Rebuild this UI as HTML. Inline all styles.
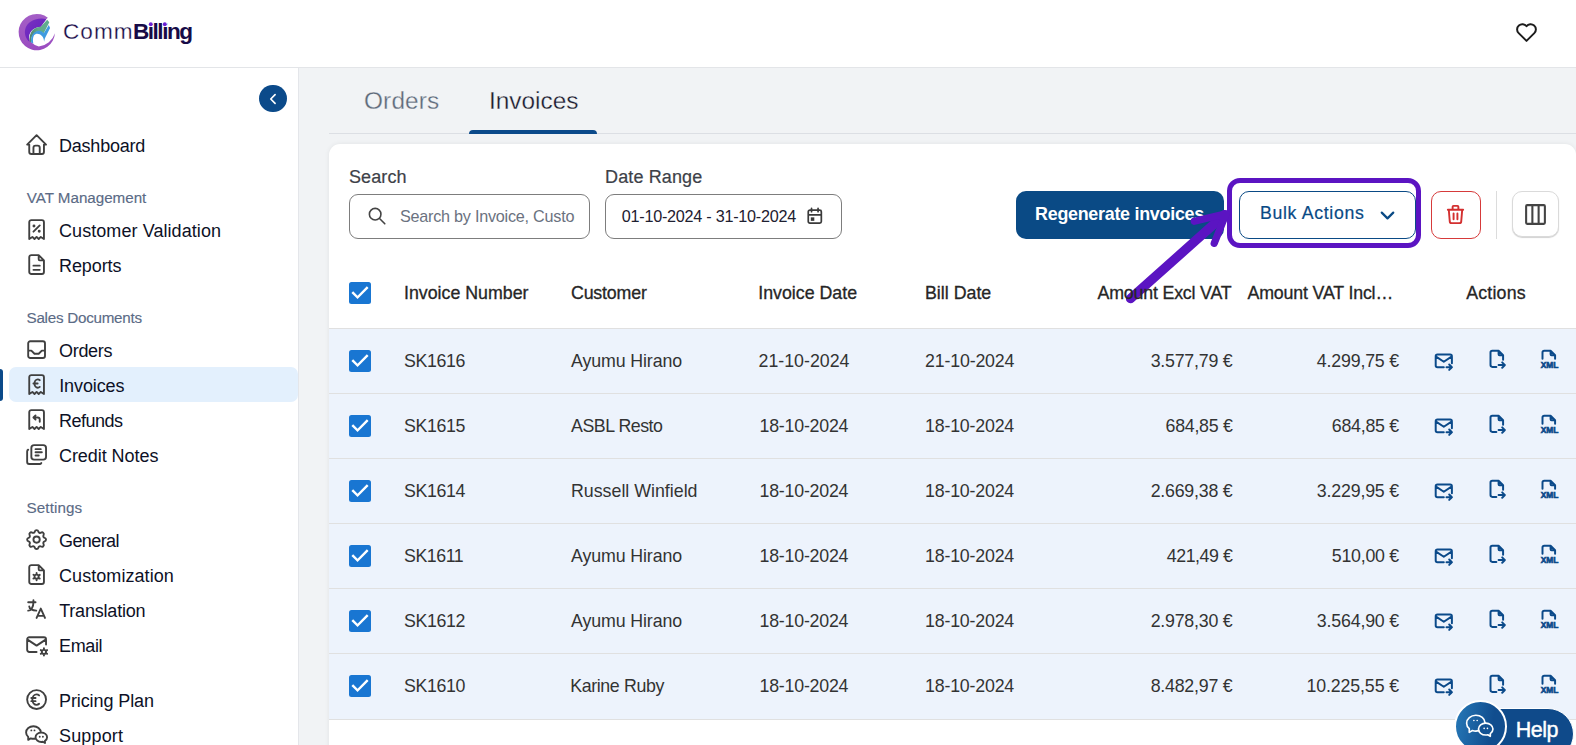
<!DOCTYPE html>
<html lang="en">
<head>
<meta charset="utf-8">
<title>CommBilling - Invoices</title>
<style>
*{box-sizing:border-box;margin:0;padding:0}
html,body{width:1576px;height:745px;overflow:hidden;background:#f1f3f5;font-family:"Liberation Sans",sans-serif;}
body{position:relative}
.abs{position:absolute}
svg{display:block;overflow:visible}
.ti{fill:none;stroke:#404040;stroke-width:1.8;stroke-linecap:round;stroke-linejoin:round}
/* header */
#hdr{position:absolute;left:0;top:0;width:1576px;height:68px;background:#fff;border-bottom:1px solid #e3e5e8}
.brand{position:absolute;height:30px;line-height:30px;font-size:22.6px;color:#170b47;white-space:nowrap}
#b_comm{font-weight:400;-webkit-text-stroke:0.3px #fff}
#b_bill{font-weight:700}
/* sidebar */
#side{position:absolute;left:0;top:68px;width:299px;height:677px;background:#fff;border-right:1px solid #e4e6ea}
.nav{position:absolute;height:24px;line-height:24px;font-size:18px;color:#0d1126;white-space:nowrap}
.sec{position:absolute;height:20px;line-height:20px;font-size:15.2px;color:#5b6b86;white-space:nowrap;-webkit-text-stroke:0.15px #5b6b86}
.nico{position:absolute;left:23.9px;width:25.2px;height:25.2px}
#sel{position:absolute;left:9px;top:367px;width:288.5px;height:34.5px;background:#e3f0fd;border-radius:7px}
#selbar{position:absolute;left:0;top:369px;width:3px;height:32px;background:#0b4a8a;border-radius:0 3px 3px 0}
#collapse{position:absolute;left:259.2px;top:84.7px;width:27.6px;height:27.6px;border-radius:50%;background:#0b4a8a}
/* tabs */
.tab{position:absolute;height:32px;line-height:32px;font-size:24.4px;white-space:nowrap;-webkit-text-stroke:0.3px #f1f3f5}
#tabline{position:absolute;left:329px;top:133px;width:1247px;height:1px;background:#dcdfe4}
#tabul{position:absolute;left:469px;top:130px;width:128px;height:4px;background:#0b4a8a;border-radius:4px 4px 0 0}
/* card */
#card{position:absolute;left:329px;top:144px;width:1247px;height:620px;background:#fff;border-radius:11px 11px 0 0;box-shadow:0 0 5px rgba(0,0,0,.07)}
.lbl{position:absolute;height:24px;line-height:24px;font-size:18px;color:#3d4148;white-space:nowrap;-webkit-text-stroke:0.2px #3d4148}
.inp{position:absolute;top:194px;height:45px;border:1px solid #7d7d7d;border-radius:9px;background:#fff}
.btn{position:absolute;white-space:nowrap}
/* table */
.th{position:absolute;height:24px;line-height:24px;font-size:17.8px;color:#262626;white-space:nowrap;font-weight:400;-webkit-text-stroke:0.3px #262626}
.row{position:absolute;left:329px;width:1247px;height:65px;background:#edf3fc;border-top:1px solid #e0e0e0}
.td{position:absolute;height:24px;line-height:24px;font-size:17.8px;color:#333;white-space:nowrap;letter-spacing:0.05px}
.r{text-align:right}
.cb{position:absolute;left:20px;width:22px;height:22px;background:#1976d2;border-radius:2.5px}
.cb svg{position:absolute;left:0;top:0}
.ai{position:absolute;width:21.6px;height:21.6px}
.ai .s{fill:none;stroke:#0b4a8a;stroke-width:2.2;stroke-linecap:round;stroke-linejoin:round}
</style>
</head>
<body>
<!-- HEADER -->
<div id="hdr">
<svg class="abs" id="logo" style="left:14px;top:8px;width:50px;height:48px" viewBox="0 0 776 745">
<defs><linearGradient id="lg1" x1="0" y1="0" x2="0" y2="1"><stop offset="0" stop-color="#a45fc6"/><stop offset="1" stop-color="#9a4cc0"/></linearGradient>
<linearGradient id="lg2" x1="0" y1="0" x2="1" y2="1"><stop offset="0" stop-color="#7a33c0"/><stop offset="1" stop-color="#5f1cc0"/></linearGradient>
<linearGradient id="lg3" x1="0" y1="0" x2="1" y2="0"><stop offset="0" stop-color="#4d8470"/><stop offset="0.45" stop-color="#62ab8d"/><stop offset="1" stop-color="#5fae8f"/></linearGradient></defs>
<path d="M525 150 A282 282 0 1 0 635 390 A300 300 0 0 1 385 598 A200 200 0 0 1 225 430 C225 330 300 290 415 290 L500 175 Z" fill="url(#lg1)"/>
<path d="M238 525 C125 420 150 235 330 180 C400 158 460 163 500 175 L415 292 C330 300 270 340 240 410 C228 450 230 490 238 525 Z" fill="url(#lg2)"/>
<path d="M515 183 L548 222 L462 392 C400 340 310 360 275 450 C265 480 262 510 264 536 L246 520 C225 430 270 300 415 292 Z" fill="url(#lg3)"/>
<path d="M540 262 L560 310 L480 470 L466 525 C470 440 400 390 340 402 C300 415 285 470 300 550 L266 536 C255 440 300 360 380 352 C420 350 445 370 462 392 Z" fill="#3f9be0"/>
</svg>
  <div class="brand" id="b_comm" style="left:63px;top:17px;letter-spacing:1.05px">Comm</div><div class="brand" id="b_bill" style="left:133px;top:17px;letter-spacing:-1.5px">Billing</div>
<svg class="abs" style="left:146px;top:20px;width:24px;height:8px" viewBox="146 20 24 8"><rect x="148.6" y="22" width="4.4" height="4.2" fill="#fff"/><rect x="162.6" y="22" width="4.4" height="4.2" fill="#fff"/><circle cx="150.8" cy="24.3" r="1.95" fill="#6b1fd3"/><circle cx="164.8" cy="24.3" r="1.95" fill="#6b1fd3"/></svg>
</div>
<!-- SIDEBAR -->
<div id="side"></div>
<div id="sel"></div><div id="selbar"></div>
<div id="collapse"></div>

<div class="nav" id="n_dash" style="left:59.00px;top:133.60px;letter-spacing:-0.22px">Dashboard</div>
<div class="sec" id="s_vat" style="left:26.70px;top:188.00px;letter-spacing:-0.02px">VAT Management</div>
<div class="nav" id="n_cust" style="left:59.00px;top:219.10px;letter-spacing:0.07px">Customer Validation</div>
<div class="nav" id="n_rep" style="left:59.00px;top:254.10px;letter-spacing:-0.10px">Reports</div>
<div class="sec" id="s_sales" style="left:26.50px;top:308.00px;letter-spacing:-0.25px">Sales Documents</div>
<div class="nav" id="n_ord" style="left:59.00px;top:338.60px;letter-spacing:-0.30px">Orders</div>
<div class="nav" id="n_inv" style="left:59.2px;top:373.60px;letter-spacing:-0.10px">Invoices</div>
<div class="nav" id="n_ref" style="left:59.00px;top:408.60px;letter-spacing:-0.52px">Refunds</div>
<div class="nav" id="n_cred" style="left:59.00px;top:443.60px;letter-spacing:-0.06px">Credit Notes</div>
<div class="sec" id="s_set" style="left:26.50px;top:497.75px;letter-spacing:0.12px">Settings</div>
<div class="nav" id="n_gen" style="left:59.00px;top:528.60px;letter-spacing:-0.60px">General</div>
<div class="nav" id="n_cus" style="left:59.00px;top:563.60px;letter-spacing:0.06px">Customization</div>
<div class="nav" id="n_tra" style="left:59.2px;top:598.60px;letter-spacing:-0.20px">Translation</div>
<div class="nav" id="n_em" style="left:59.00px;top:633.60px;letter-spacing:-0.35px">Email</div>
<div class="nav" id="n_pri" style="left:59.00px;top:688.60px;letter-spacing:-0.10px">Pricing Plan</div>
<div class="nav" id="n_sup" style="left:59.00px;top:723.60px;letter-spacing:0.15px">Support</div>


<!-- NAV ICONS -->
<svg class="nico" style="top:131.7px" viewBox="0 0 24 24"><path class="ti" d="M5 12l-2 0l9 -9l9 9l-2 0 M5 12v7a2 2 0 0 0 2 2h10a2 2 0 0 0 2 -2v-7 M9 21v-6a2 2 0 0 1 2 -2h2a2 2 0 0 1 2 2v6"/></svg>
<svg class="nico" style="top:217.0px" viewBox="0 0 24 24"><path class="ti" d="M9 14l6 -6 M9.5 8.5m-.5 0a.5 .5 0 1 0 1 0a.5 .5 0 1 0 -1 0 M14.5 13.5m-.5 0a.5 .5 0 1 0 1 0a.5 .5 0 1 0 -1 0 M5 21v-16a2 2 0 0 1 2 -2h10a2 2 0 0 1 2 2v16l-3 -2l-2 2l-2 -2l-2 2l-2 -2l-3 2"/></svg>
<svg class="nico" style="top:251.9px" viewBox="0 0 24 24"><path class="ti" d="M14 3v4a1 1 0 0 0 1 1h4 M17 21h-10a2 2 0 0 1 -2 -2v-14a2 2 0 0 1 2 -2h7l5 5v11a2 2 0 0 1 -2 2z M9 17h6 M9 13h6"/></svg>
<svg class="nico" style="top:336.9px" viewBox="0 0 24 24"><path class="ti" d="M4 4m0 2a2 2 0 0 1 2 -2h12a2 2 0 0 1 2 2v12a2 2 0 0 1 -2 2h-12a2 2 0 0 1 -2 -2z M4 13h3l3 3h4l3 -3h3"/></svg>
<svg class="nico" style="top:372.0px" viewBox="0 0 24 24"><path class="ti" d="M5 21v-16a2 2 0 0 1 2 -2h10a2 2 0 0 1 2 2v16l-3 -2l-2 2l-2 -2l-2 2l-2 -2l-3 2 M15 7.8c-.523 -.502 -1.172 -.8 -1.875 -.8c-1.727 0 -3.125 1.791 -3.125 4s1.398 4 3.125 4c.703 0 1.352 -.298 1.874 -.8 M9 11h4"/></svg>
<svg class="nico" style="top:407.0px" viewBox="0 0 24 24"><path class="ti" d="M5 21v-16a2 2 0 0 1 2 -2h10a2 2 0 0 1 2 2v16l-3 -2l-2 2l-2 -2l-2 2l-2 -2l-3 2 M15 14v-2a2 2 0 0 0 -2 -2h-4l2 -2m0 4l-2 -2"/></svg>
<svg class="nico" style="top:442.0px" viewBox="0 0 24 24"><path class="ti" d="M7 5.667a2.667 2.667 0 0 1 2.667 -2.667h8.666a2.667 2.667 0 0 1 2.667 2.667v8.466a2.667 2.667 0 0 1 -2.667 2.667h-8.666a2.667 2.667 0 0 1 -2.667 -2.667z M4.012 7.263a2.005 2.005 0 0 0 -1.012 1.737v10c0 1.100 .9 2 2 2h10c.75 0 1.158 -.385 1.500 -1 M11 6.800h5 M11 9.800h6 M11 12.800h3"/></svg>
<svg class="nico" style="top:527.0px" viewBox="0 0 24 24"><path class="ti" d="M10.325 4.317c.426 -1.756 2.924 -1.756 3.35 0a1.724 1.724 0 0 0 2.573 1.066c1.543 -.94 3.31 .826 2.37 2.37a1.724 1.724 0 0 0 1.065 2.572c1.756 .426 1.756 2.924 0 3.35a1.724 1.724 0 0 0 -1.066 2.573c.94 1.543 -.826 3.31 -2.37 2.37a1.724 1.724 0 0 0 -2.572 1.065c-.426 1.756 -2.924 1.756 -3.35 0a1.724 1.724 0 0 0 -2.573 -1.066c-1.543 .94 -3.31 -.826 -2.37 -2.37a1.724 1.724 0 0 0 -1.065 -2.572c-1.756 -.426 -1.756 -2.924 0 -3.35a1.724 1.724 0 0 0 1.066 -2.573c-.94 -1.543 .826 -3.31 2.37 -2.37c1 .608 2.296 .07 2.572 -1.065z M9 12a3 3 0 1 0 6 0a3 3 0 0 0 -6 0"/></svg>
<svg class="nico" style="top:562.0px" viewBox="0 0 24 24"><path class="ti" d="M12 14m-2 0a2 2 0 1 0 4 0a2 2 0 1 0 -4 0 M12 10.5v1.5 M12 16v1.5 M15.031 12.25l-1.299 .75 M10.268 15l-1.3 .75 M15 15.803l-1.285 -.773 M10.285 12.97l-1.285 -.773 M14 3v4a1 1 0 0 0 1 1h4 M17 21h-10a2 2 0 0 1 -2 -2v-14a2 2 0 0 1 2 -2h7l5 5v11a2 2 0 0 1 -2 2z"/></svg>
<svg class="nico" style="top:597.0px" viewBox="0 0 24 24"><path class="ti" d="M4 5h7 M9 3v2c0 4.418 -2.239 8 -5 8 M5 9c0 2.144 2.952 3.908 6.7 4 M12 20l4 -9l4 9 M19.1 18h-6.2"/></svg>
<svg class="nico" style="top:632.0px" viewBox="0 0 24 24"><path class="ti" d="M12 19h-7a2 2 0 0 1 -2 -2v-10a2 2 0 0 1 2 -2h14a2 2 0 0 1 2 2v5 M3 7l9 6l9 -6 M19.001 19m-2 0a2 2 0 1 0 4 0a2 2 0 1 0 -4 0 M19.001 15.5v1.5 M19.001 21v1.5 M22.032 17.25l-1.299 .75 M17.27 20l-1.3 .75 M15.97 17.25l1.3 .75 M20.733 20l1.3 .75"/></svg>
<svg class="nico" style="top:687.0px" viewBox="0 0 24 24"><path class="ti" d="M12 12m-9 0a9 9 0 1 0 18 0a9 9 0 1 0 -18 0 M14.401 8c-.669 -.628 -1.5 -1 -2.401 -1c-2.21 0 -4 2.239 -4 5s1.79 5 4 5c.9 0 1.731 -.372 2.4 -1 M7 10.5h4 M7 13.5h4"/></svg>
<svg class="nico" style="top:722.0px" viewBox="0 0 24 24"><path class="ti" d="M16.5 10c3.038 0 5.5 2.015 5.5 4.5c0 1.397 -.778 2.645 -2 3.470l0 2.030l-1.964 -1.178a6.649 6.649 0 0 1 -1.536 .178c-3.038 0 -5.5 -2.015 -5.500 -4.500s2.462 -4.500 5.500 -4.500z M11.197 15.698c-.69 .196 -1.43 .302 -2.197 .302a8.008 8.008 0 0 1 -2.612 -.432l-2.388 1.432v-2.801c-1.237 -1.082 -2 -2.564 -2 -4.199c0 -3.314 3.134 -6 7 -6c3.782 0 6.863 2.570 7 5.785l0 .233 M10 8h.01 M7 8h.01 M15 14h.01 M18 14h.01"/></svg>
<svg class="abs" style="left:263px;top:88.7px;width:20px;height:20px" viewBox="0 0 24 24"><path d="M14.5 6.800l-5.200 5.200l5.200 5.200" fill="none" stroke="#fff" stroke-width="2" stroke-linecap="round" stroke-linejoin="round"/></svg>
<svg class="abs" style="left:1514.1px;top:19.8px;width:25px;height:25px" viewBox="0 0 24 24"><path d="M19.5 12.572l-7.5 7.428l-7.5 -7.428a5 5 0 1 1 7.500 -6.566a5 5 0 1 1 7.500 6.572" fill="none" stroke="#1c1c1c" stroke-width="1.9" stroke-linecap="round" stroke-linejoin="round"/></svg>
<!-- TABS -->
<div class="tab" id="t_ord" style="left:364.00px;top:85.00px;letter-spacing:0.15px;color:#5e6a7a">Orders</div>
<div class="tab" id="t_inv" style="left:489.00px;top:85.00px;letter-spacing:-0.01px;color:#1b1a2e">Invoices</div>
<div id="tabline"></div><div id="tabul"></div>

<!-- CARD -->
<div id="card"></div>
<div class="lbl" id="l_s" style="left:349.00px;top:165.00px;letter-spacing:0.10px">Search</div>
<div class="lbl" id="l_d" style="left:605.00px;top:165.00px;letter-spacing:0.13px">Date Range</div>
<div class="inp" style="left:349px;width:241px"></div>
<div class="inp" style="left:605px;width:237px"></div>

<!-- INPUT CONTENTS -->
<svg class="abs" style="left:365.5px;top:205.2px;width:22px;height:22px" viewBox="0 0 24 24"><path d="M10 10m-6.3 0a6.3 6.3 0 1 0 12.6 0a6.3 6.3 0 1 0 -12.6 0 M20.500 20.500l-6 -6" fill="none" stroke="#444" stroke-width="1.75" stroke-linecap="round"/></svg>
<div class="abs" style="left:396px;top:200px;width:179px;height:32px;overflow:hidden;white-space:nowrap;font-size:16.2px;line-height:24px;color:#6b7280"><span id="ph" style="position:relative;left:4.00px;top:4.00px;letter-spacing:-0.24px">Search by Invoice, Custo</span><span style="position:relative;left:4px;top:4px">mer</span></div>
<div class="abs" id="dr" style="left:621.75px;top:204.00px;letter-spacing:-0.25px;height:24px;line-height:24px;font-size:16.2px;color:#1e2030;white-space:nowrap">01-10-2024 - 31-10-2024</div>
<svg class="abs" style="left:804.8px;top:206.4px;width:19.6px;height:19.6px" viewBox="0 0 24 24"><path d="M4 5m0 2a2 2 0 0 1 2 -2h12a2 2 0 0 1 2 2v12a2 2 0 0 1 -2 2h-12a2 2 0 0 1 -2 -2z M16 3l0 4 M8 3l0 4 M4 11l16 0" fill="none" stroke="#3a3a3a" stroke-width="2.1" stroke-linecap="round" stroke-linejoin="round"/><rect x="7.1" y="13.9" width="4.3" height="4.300" fill="#3a3a3a"/></svg>

<!-- BUTTONS -->
<div class="btn" id="regen" style="left:1016px;top:191px;width:208px;height:48px;background:#0a4a85;border-radius:10px;color:#fff;font-weight:700;font-size:17.9px;line-height:48px;text-align:center"><span id="rg" style="position:relative;left:-0.5px;top:-1.5px;letter-spacing:-0.27px">Regenerate invoices</span></div>
<div class="abs" id="hl" style="left:1227px;top:178px;width:194px;height:70px;border:5px solid #5b14c2;border-radius:13px"></div>
<div class="btn" id="bulk" style="left:1239px;top:191px;width:177px;height:48px;border:1px solid #0a4a85;border-radius:10px;background:#fff"></div>
<div class="abs" id="bulkt" style="left:1260.00px;top:200.50px;letter-spacing:0.68px;height:24px;line-height:24px;font-size:17.7px;color:#0a4a85;white-space:nowrap;-webkit-text-stroke:0.2px #0a4a85">Bulk Actions</div>
<svg class="abs" style="left:1376px;top:203.500px;width:23px;height:23px" viewBox="0 0 24 24"><path d="M6 9l6 6l6 -6" fill="none" stroke="#0a4a85" stroke-width="2.3" stroke-linecap="round" stroke-linejoin="round"/></svg>
<div class="btn" id="del" style="left:1431px;top:191px;width:50px;height:48px;border:1px solid #d63a3a;border-radius:10px;background:#fff"></div>
<svg class="abs" style="left:1443.500px;top:203px;width:23px;height:23px" viewBox="0 0 24 24"><path d="M4 7l16 0 M10 11l0 6 M14 11l0 6 M5 7l1 12a2 2 0 0 0 2 2h8a2 2 0 0 0 2 -2l1 -12 M9 7v-3a1 1 0 0 1 1 -1h4a1 1 0 0 1 1 1v3" fill="none" stroke="#d32f2f" stroke-width="2" stroke-linecap="round" stroke-linejoin="round"/></svg>
<div class="abs" style="left:1496px;top:191px;width:1px;height:48px;background:#dcdcdc"></div>
<div class="btn" id="cols" style="left:1512px;top:191px;width:47px;height:46px;border:1px solid #dadada;border-radius:10px;background:#fff;box-shadow:0 1px 1px rgba(0,0,0,.18)"></div>
<svg class="abs" style="left:1522.9px;top:201.6px;width:25px;height:25px" viewBox="0 0 24 24"><path d="M3 3m0 1a1 1 0 0 1 1 -1h16a1 1 0 0 1 1 1v16a1 1 0 0 1 -1 1h-16a1 1 0 0 1 -1 -1zm6 -1v18m6 -18v18" fill="none" stroke="#444" stroke-width="2" stroke-linecap="round" stroke-linejoin="round"/></svg>
<!-- ARROW -->
<svg class="abs" style="left:0;top:0;width:1576px;height:745px;pointer-events:none" viewBox="0 0 1576 745"><path d="M1130.6 298.6 L1224.5 214.8" fill="none" stroke="#5b14c2" stroke-width="9.4" stroke-linecap="round"/><path d="M1194.3 221.3 L1226 213.800 L1214.2 243.300" fill="none" stroke="#5b14c2" stroke-width="7.2" stroke-linecap="round" stroke-linejoin="round"/></svg>

<!-- TABLE HEADER -->
<div class="cb" style="left:349px;top:282px"><svg width="22" height="22" viewBox="0 0 22 22"><path d="M8.560 17.100L2.440 11L4.170 9.280L8.560 13.650L17.830 4.370L19.560 6.110Z" fill="#fff"/></svg></div>
<div class="th" id="th0" style="left:404.00px;top:281.00px;letter-spacing:0.00px">Invoice Number</div>
<div class="th" id="th1" style="left:571.00px;top:281.00px;letter-spacing:-0.18px">Customer</div>
<div class="th" id="th2" style="left:758.25px;top:281.00px;letter-spacing:0.00px">Invoice Date</div>
<div class="th" id="th3" style="left:925.00px;top:281.00px;letter-spacing:0.00px">Bill Date</div>
<div class="th r" id="th4" style="right:344.50px;top:281.00px;letter-spacing:-0.18px">Amount Excl VAT</div>
<div class="th" id="th5" style="left:1247.50px;top:281.00px;letter-spacing:-0.17px">Amount VAT Incl…</div>
<div class="th" id="th6" style="left:1466.25px;top:281.00px;letter-spacing:0.17px">Actions</div>

<!-- TABLE ROWS -->
<div class="row" style="top:328px"><div class="cb" style="top:21px"><svg width="22" height="22" viewBox="0 0 22 22"><path d="M8.560 17.100L2.440 11L4.170 9.280L8.560 13.650L17.830 4.370L19.560 6.110Z" fill="#fff"/></svg></div><div class="td" id="c0_1" style="left:75.00px;top:20.00px;letter-spacing:-0.40px">SK1616</div><div class="td" id="c0_2" style="left:242.00px;top:20.00px;letter-spacing:-0.11px">Ayumu Hirano</div><div class="td" id="c0_3" style="left:429.50px;top:20.00px;letter-spacing:0.00px">21-10-2024</div><div class="td" id="c0_4" style="left:596.00px;top:20.00px;letter-spacing:-0.17px">21-10-2024</div><div class="td r" id="c0_5" style="right:343.50px;top:20.00px;letter-spacing:-0.22px">3.577,79 €</div><div class="td r" id="c0_6" style="right:177.00px;top:20.00px;letter-spacing:-0.19px">4.299,75 €</div><svg class="ai" style="left:1103.7px;top:21.6px" viewBox="0 0 24 24"><path class="s" d="M12 18h-7a2 2 0 0 1 -2 -2v-10a2 2 0 0 1 2 -2h14a2 2 0 0 1 2 2v7.500 M3 6l9 6l9 -6 M15 18h6 M18 15l3 3l-3 3"/></svg><svg class="ai" style="left:1157.3px;top:19.4px" viewBox="0 0 24 24"><path class="s" d="M14 3v4a1 1 0 0 0 1 1h4 M11.500 21h-4.500a2 2 0 0 1 -2 -2v-14a2 2 0 0 1 2 -2h7l5 5v5m-5 6h7m-3 -3l3 3l-3 3"/></svg><svg class="ai" style="left:1209.1px;top:19.1px" viewBox="0 0 24 24"><path class="s" d="M14 3v4a1 1 0 0 0 1 1h4 M5 12v-7a2 2 0 0 1 2 -2h7l5 5v4"/><text x="3.1" y="22.1" font-family="Liberation Sans, sans-serif" font-weight="700" font-size="9.8" fill="#0b4a8a" stroke="#0b4a8a" stroke-width="0.75" textLength="19.6" lengthAdjust="spacingAndGlyphs">XML</text></svg></div>
<div class="row" style="top:393px"><div class="cb" style="top:21px"><svg width="22" height="22" viewBox="0 0 22 22"><path d="M8.560 17.100L2.440 11L4.170 9.280L8.560 13.650L17.830 4.370L19.560 6.110Z" fill="#fff"/></svg></div><div class="td" id="c1_1" style="left:75.00px;top:20.00px;letter-spacing:-0.40px">SK1615</div><div class="td" id="c1_2" style="left:242.00px;top:20.00px;letter-spacing:-0.47px">ASBL Resto</div><div class="td" id="c1_3" style="left:430.50px;top:20.00px;letter-spacing:-0.22px">18-10-2024</div><div class="td" id="c1_4" style="left:596.00px;top:20.00px;letter-spacing:-0.19px">18-10-2024</div><div class="td r" id="c1_5" style="right:343.50px;top:20.00px;letter-spacing:-0.29px">684,85 €</div><div class="td r" id="c1_6" style="right:177.00px;top:20.00px;letter-spacing:-0.25px">684,85 €</div><svg class="ai" style="left:1103.7px;top:21.6px" viewBox="0 0 24 24"><path class="s" d="M12 18h-7a2 2 0 0 1 -2 -2v-10a2 2 0 0 1 2 -2h14a2 2 0 0 1 2 2v7.500 M3 6l9 6l9 -6 M15 18h6 M18 15l3 3l-3 3"/></svg><svg class="ai" style="left:1157.3px;top:19.4px" viewBox="0 0 24 24"><path class="s" d="M14 3v4a1 1 0 0 0 1 1h4 M11.500 21h-4.500a2 2 0 0 1 -2 -2v-14a2 2 0 0 1 2 -2h7l5 5v5m-5 6h7m-3 -3l3 3l-3 3"/></svg><svg class="ai" style="left:1209.1px;top:19.1px" viewBox="0 0 24 24"><path class="s" d="M14 3v4a1 1 0 0 0 1 1h4 M5 12v-7a2 2 0 0 1 2 -2h7l5 5v4"/><text x="3.1" y="22.1" font-family="Liberation Sans, sans-serif" font-weight="700" font-size="9.8" fill="#0b4a8a" stroke="#0b4a8a" stroke-width="0.75" textLength="19.6" lengthAdjust="spacingAndGlyphs">XML</text></svg></div>
<div class="row" style="top:458px"><div class="cb" style="top:21px"><svg width="22" height="22" viewBox="0 0 22 22"><path d="M8.560 17.100L2.440 11L4.170 9.280L8.560 13.650L17.830 4.370L19.560 6.110Z" fill="#fff"/></svg></div><div class="td" id="c2_1" style="left:75.00px;top:20.00px;letter-spacing:-0.40px">SK1614</div><div class="td" id="c2_2" style="left:242.00px;top:20.00px;letter-spacing:0.00px">Russell Winfield</div><div class="td" id="c2_3" style="left:430.50px;top:20.00px;letter-spacing:-0.22px">18-10-2024</div><div class="td" id="c2_4" style="left:596.00px;top:20.00px;letter-spacing:-0.19px">18-10-2024</div><div class="td r" id="c2_5" style="right:343.50px;top:20.00px;letter-spacing:-0.22px">2.669,38 €</div><div class="td r" id="c2_6" style="right:177.00px;top:20.00px;letter-spacing:-0.19px">3.229,95 €</div><svg class="ai" style="left:1103.7px;top:21.6px" viewBox="0 0 24 24"><path class="s" d="M12 18h-7a2 2 0 0 1 -2 -2v-10a2 2 0 0 1 2 -2h14a2 2 0 0 1 2 2v7.500 M3 6l9 6l9 -6 M15 18h6 M18 15l3 3l-3 3"/></svg><svg class="ai" style="left:1157.3px;top:19.4px" viewBox="0 0 24 24"><path class="s" d="M14 3v4a1 1 0 0 0 1 1h4 M11.500 21h-4.500a2 2 0 0 1 -2 -2v-14a2 2 0 0 1 2 -2h7l5 5v5m-5 6h7m-3 -3l3 3l-3 3"/></svg><svg class="ai" style="left:1209.1px;top:19.1px" viewBox="0 0 24 24"><path class="s" d="M14 3v4a1 1 0 0 0 1 1h4 M5 12v-7a2 2 0 0 1 2 -2h7l5 5v4"/><text x="3.1" y="22.1" font-family="Liberation Sans, sans-serif" font-weight="700" font-size="9.8" fill="#0b4a8a" stroke="#0b4a8a" stroke-width="0.75" textLength="19.6" lengthAdjust="spacingAndGlyphs">XML</text></svg></div>
<div class="row" style="top:523px"><div class="cb" style="top:21px"><svg width="22" height="22" viewBox="0 0 22 22"><path d="M8.560 17.100L2.440 11L4.170 9.280L8.560 13.650L17.830 4.370L19.560 6.110Z" fill="#fff"/></svg></div><div class="td" id="c3_1" style="left:75.00px;top:20.00px;letter-spacing:-0.45px">SK1611</div><div class="td" id="c3_2" style="left:242.00px;top:20.00px;letter-spacing:-0.11px">Ayumu Hirano</div><div class="td" id="c3_3" style="left:430.50px;top:20.00px;letter-spacing:-0.22px">18-10-2024</div><div class="td" id="c3_4" style="left:596.00px;top:20.00px;letter-spacing:-0.19px">18-10-2024</div><div class="td r" id="c3_5" style="right:343.50px;top:20.00px;letter-spacing:-0.43px">421,49 €</div><div class="td r" id="c3_6" style="right:177.00px;top:20.00px;letter-spacing:-0.25px">510,00 €</div><svg class="ai" style="left:1103.7px;top:21.6px" viewBox="0 0 24 24"><path class="s" d="M12 18h-7a2 2 0 0 1 -2 -2v-10a2 2 0 0 1 2 -2h14a2 2 0 0 1 2 2v7.500 M3 6l9 6l9 -6 M15 18h6 M18 15l3 3l-3 3"/></svg><svg class="ai" style="left:1157.3px;top:19.4px" viewBox="0 0 24 24"><path class="s" d="M14 3v4a1 1 0 0 0 1 1h4 M11.500 21h-4.500a2 2 0 0 1 -2 -2v-14a2 2 0 0 1 2 -2h7l5 5v5m-5 6h7m-3 -3l3 3l-3 3"/></svg><svg class="ai" style="left:1209.1px;top:19.1px" viewBox="0 0 24 24"><path class="s" d="M14 3v4a1 1 0 0 0 1 1h4 M5 12v-7a2 2 0 0 1 2 -2h7l5 5v4"/><text x="3.1" y="22.1" font-family="Liberation Sans, sans-serif" font-weight="700" font-size="9.8" fill="#0b4a8a" stroke="#0b4a8a" stroke-width="0.75" textLength="19.6" lengthAdjust="spacingAndGlyphs">XML</text></svg></div>
<div class="row" style="top:588px"><div class="cb" style="top:21px"><svg width="22" height="22" viewBox="0 0 22 22"><path d="M8.560 17.100L2.440 11L4.170 9.280L8.560 13.650L17.830 4.370L19.560 6.110Z" fill="#fff"/></svg></div><div class="td" id="c4_1" style="left:75.00px;top:20.00px;letter-spacing:-0.40px">SK1612</div><div class="td" id="c4_2" style="left:242.00px;top:20.00px;letter-spacing:-0.11px">Ayumu Hirano</div><div class="td" id="c4_3" style="left:430.50px;top:20.00px;letter-spacing:-0.22px">18-10-2024</div><div class="td" id="c4_4" style="left:596.00px;top:20.00px;letter-spacing:-0.19px">18-10-2024</div><div class="td r" id="c4_5" style="right:343.50px;top:20.00px;letter-spacing:-0.22px">2.978,30 €</div><div class="td r" id="c4_6" style="right:177.00px;top:20.00px;letter-spacing:-0.19px">3.564,90 €</div><svg class="ai" style="left:1103.7px;top:21.6px" viewBox="0 0 24 24"><path class="s" d="M12 18h-7a2 2 0 0 1 -2 -2v-10a2 2 0 0 1 2 -2h14a2 2 0 0 1 2 2v7.500 M3 6l9 6l9 -6 M15 18h6 M18 15l3 3l-3 3"/></svg><svg class="ai" style="left:1157.3px;top:19.4px" viewBox="0 0 24 24"><path class="s" d="M14 3v4a1 1 0 0 0 1 1h4 M11.500 21h-4.500a2 2 0 0 1 -2 -2v-14a2 2 0 0 1 2 -2h7l5 5v5m-5 6h7m-3 -3l3 3l-3 3"/></svg><svg class="ai" style="left:1209.1px;top:19.1px" viewBox="0 0 24 24"><path class="s" d="M14 3v4a1 1 0 0 0 1 1h4 M5 12v-7a2 2 0 0 1 2 -2h7l5 5v4"/><text x="3.1" y="22.1" font-family="Liberation Sans, sans-serif" font-weight="700" font-size="9.8" fill="#0b4a8a" stroke="#0b4a8a" stroke-width="0.75" textLength="19.6" lengthAdjust="spacingAndGlyphs">XML</text></svg></div>
<div class="row" style="top:653px;height:66px"><div class="cb" style="top:21px"><svg width="22" height="22" viewBox="0 0 22 22"><path d="M8.560 17.100L2.440 11L4.170 9.280L8.560 13.650L17.830 4.370L19.560 6.110Z" fill="#fff"/></svg></div><div class="td" id="c5_1" style="left:75.00px;top:20.00px;letter-spacing:-0.40px">SK1610</div><div class="td" id="c5_2" style="left:241.25px;top:20.00px;letter-spacing:-0.38px">Karine Ruby</div><div class="td" id="c5_3" style="left:430.50px;top:20.00px;letter-spacing:-0.22px">18-10-2024</div><div class="td" id="c5_4" style="left:596.00px;top:20.00px;letter-spacing:-0.19px">18-10-2024</div><div class="td r" id="c5_5" style="right:343.50px;top:20.00px;letter-spacing:-0.22px">8.482,97 €</div><div class="td r" id="c5_6" style="right:177.00px;top:20.00px;letter-spacing:-0.12px">10.225,55 €</div><svg class="ai" style="left:1103.7px;top:21.6px" viewBox="0 0 24 24"><path class="s" d="M12 18h-7a2 2 0 0 1 -2 -2v-10a2 2 0 0 1 2 -2h14a2 2 0 0 1 2 2v7.500 M3 6l9 6l9 -6 M15 18h6 M18 15l3 3l-3 3"/></svg><svg class="ai" style="left:1157.3px;top:19.4px" viewBox="0 0 24 24"><path class="s" d="M14 3v4a1 1 0 0 0 1 1h4 M11.500 21h-4.500a2 2 0 0 1 -2 -2v-14a2 2 0 0 1 2 -2h7l5 5v5m-5 6h7m-3 -3l3 3l-3 3"/></svg><svg class="ai" style="left:1209.1px;top:19.1px" viewBox="0 0 24 24"><path class="s" d="M14 3v4a1 1 0 0 0 1 1h4 M5 12v-7a2 2 0 0 1 2 -2h7l5 5v4"/><text x="3.1" y="22.1" font-family="Liberation Sans, sans-serif" font-weight="700" font-size="9.8" fill="#0b4a8a" stroke="#0b4a8a" stroke-width="0.75" textLength="19.6" lengthAdjust="spacingAndGlyphs">XML</text></svg></div>
<div class="abs" style="left:329px;top:719px;width:1247px;height:1px;background:#e0e0e0"></div>

<!-- HELP -->
<div class="abs" id="help" style="left:1470px;top:707.6px;width:104px;height:52px;border-radius:26px;background:#0f4a8a;border:1.8px solid #fff"></div>
<div class="abs" id="helpc" style="left:1454.2px;top:700px;width:53px;height:53px;border-radius:50%;background:linear-gradient(100deg,#2679b8 0%,#114d8e 70%);border:2.4px solid #fff"></div>
<svg class="abs" style="left:1463.6px;top:709.7px;width:31.6px;height:31.6px" viewBox="0 0 24 24"><path d="M16.500 10c3.038 0 5.500 2.015 5.500 4.500c0 1.397 -.778 2.645 -2 3.470l0 2.030l-1.964 -1.178a6.649 6.649 0 0 1 -1.536 .178c-3.038 0 -5.500 -2.015 -5.500 -4.500s2.462 -4.500 5.500 -4.500z" fill="#135293" stroke="#fff" stroke-width="1.25" stroke-linejoin="round"/><path d="M11.197 15.698c-.69 .196 -1.430 .302 -2.197 .302a8.008 8.008 0 0 1 -2.612 -.432l-2.388 1.432v-2.801c-1.237 -1.082 -2 -2.564 -2 -4.199c0 -3.314 3.134 -6 7 -6c3.782 0 6.863 2.570 7 5.785l0 .233 M10 8h.010 M7.500 8h.010 M15.300 14h.010 M17.800 14h.010" fill="none" stroke="#fff" stroke-width="1.25" stroke-linecap="round" stroke-linejoin="round"/></svg>
<div class="abs" id="helpt" style="left:1515.8px;top:716.5px;letter-spacing:-0.5px;height:26px;line-height:26px;font-size:21.5px;color:#fff;white-space:nowrap;-webkit-text-stroke:0.4px #fff">Help</div>

</body>
</html>
